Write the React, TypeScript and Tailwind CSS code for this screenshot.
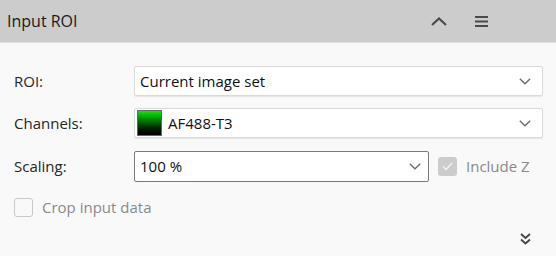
import React from "react";

const Chevron = ({ className = "" }: { className?: string }) => (
  <svg width="12" height="7" viewBox="0 0 12 7" className={className}>
    <path d="M0.8 0.8 L6 5.8 L11.2 0.8" fill="none" stroke="#6b6b6b" strokeWidth="1.3" />
  </svg>
);

export default function App() {
  return (
    <div
      className="w-[556px] h-[256px] bg-[#f9f9f9] overflow-hidden flex flex-col"
      style={{ fontFamily: '"Open Sans", "Noto Sans", sans-serif' }}
    >
      <div className="h-[43px] bg-[#cccccc] border-b border-[#e2e2e2] flex items-center pl-[7px] pr-[68px]">
        <div className="text-[16px] text-[#1a1a1a] flex-1">Input ROI</div>
        <svg width="16" height="9" viewBox="0 0 16 9" className="mr-[28px]">
          <path d="M1 8 L8 1.5 L15 8" fill="none" stroke="#4a4a4a" strokeWidth="2.2" />
        </svg>
        <svg width="13" height="11" viewBox="0 0 13 11">
          <rect x="0" y="0" width="13" height="2" fill="#4a4a4a" />
          <rect x="0" y="4.5" width="13" height="2" fill="#4a4a4a" />
          <rect x="0" y="9" width="13" height="2" fill="#4a4a4a" />
        </svg>
      </div>
      <div className="flex flex-col pl-[14px] pt-[23px] text-[15px]">
        <div className="flex items-center h-[30px]">
          <div className="w-[120px] text-[#262626]">ROI:</div>
          <div className="w-[409px] h-[30px] bg-white border border-[#d9d9d9] rounded-[2px] shadow-[0_1px_1px_rgba(0,0,0,0.08)] flex items-center pl-[5px] pr-[11px]">
            <span className="flex-1 text-[#111]">Current image set</span>
            <Chevron />
          </div>
        </div>
        <div className="flex items-center h-[30px] mt-[12px]">
          <div className="w-[120px] text-[#262626]">Channels:</div>
          <div className="w-[409px] h-[30px] bg-white border border-[#d9d9d9] rounded-[2px] shadow-[0_1px_1px_rgba(0,0,0,0.08)] flex items-center pl-[2px] pr-[11px]">
            <div className="w-[25px] h-[26px] bg-gradient-to-b from-[#00ee00] to-[#000000] border border-[#666]" />
            <span className="flex-1 text-[#111] ml-[6px]">AF488-T3</span>
            <Chevron />
          </div>
        </div>
        <div className="flex items-center h-[31px] mt-[13px]">
          <div className="w-[120px] text-[#262626]">Scaling:</div>
          <div className="w-[295px] h-[31px] bg-white border border-[#7a7a7a] rounded-[2px] flex items-center pl-[5px] pr-[7px]">
            <span className="flex-1 text-[#111]">100 %</span>
            <Chevron />
          </div>
          <div className="ml-[9px] w-[19px] h-[19px] rounded-[3px] bg-[#cccccc] flex items-center justify-center">
            <svg width="11" height="9" viewBox="0 0 11 9">
              <path d="M1 4.5 L4 7.5 L10 1" fill="none" stroke="#f4f4f4" strokeWidth="1.4" />
            </svg>
          </div>
          <span className="ml-[9px] text-[#8a8a8a]">Include Z</span>
        </div>
        <div className="flex items-center mt-[14px]">
          <div className="w-[19px] h-[19px] rounded-[3px] border border-[#c8c8c8] bg-[#f9f9f9]" />
          <span className="ml-[9px] text-[#8a8a8a]">Crop input data</span>
        </div>
        <div className="flex justify-end pr-[25px] mt-[14px]">
          <svg width="11" height="12" viewBox="0 0 11 12">
            <path d="M1 1 L5.5 5 L10 1 M1 6.5 L5.5 10.5 L10 6.5" fill="none" stroke="#444" strokeWidth="1.8" />
          </svg>
        </div>
      </div>
    </div>
  );
}
